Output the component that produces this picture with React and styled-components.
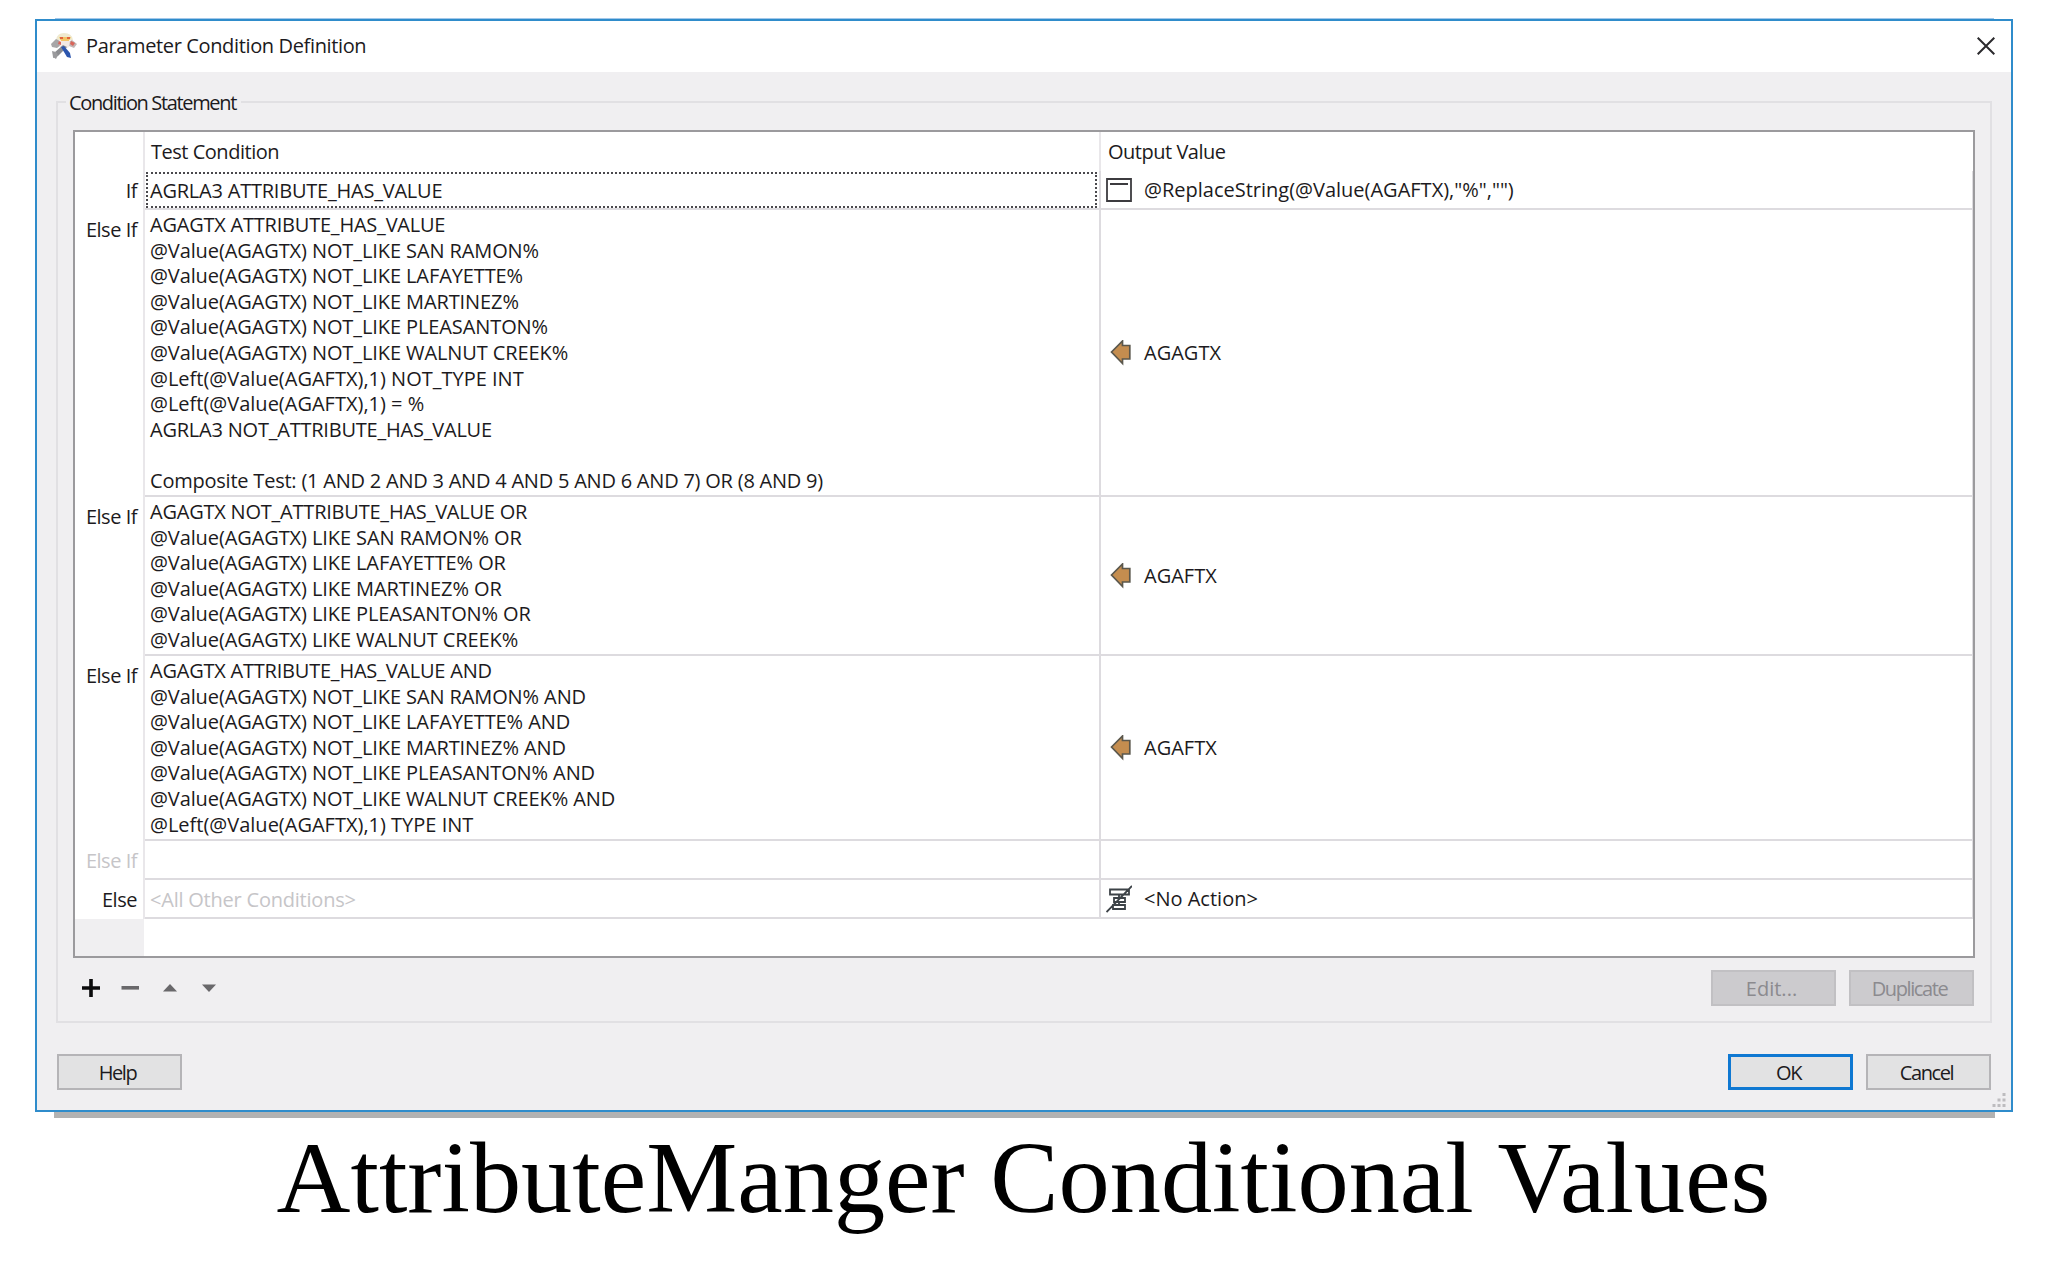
import React from 'react';
import styled, { createGlobalStyle } from 'styled-components';

const GlobalStyle = createGlobalStyle`
  * {
    box-sizing: border-box;
  }
  body {
    margin: 0;
    background: #fff;
    font-family: "Open Sans", "Noto Sans", sans-serif;
    font-size: 20px;
    font-weight: 430;
    line-height: 26px;
    color: #1c1a20;
  }
`

const Page = styled.main`
  display: flex;
  flex-direction: column;
  height: 1280px;
  padding: 18px 35px 0;
  overflow: hidden;
`

const TopEdge = styled.div`
  height: 1px;
  margin: 0 19px 0 20px;
  background: #a3c8ea;
`

const Dialog = styled.section`
  display: flex;
  flex-direction: column;
  height: 1093px;
  border: 2px solid #2f8ccb;
  background: #f0eff1;
`

const BottomEdge = styled.div`
  height: 6px;
  margin: 0 18px 0 19px;
  background: #b2b2b2;
`

const TitleBar = styled.header`
  display: flex;
  align-items: center;
  height: 51px;
  padding: 0 16px 2px 13px;
  background: #fff;
`

const Title = styled.h1`
  flex: 1;
  margin: 1px 0 0 7px;
  font-size: 20px;
  font-weight: 430;
  letter-spacing: -0.36px;
`

const GroupBox = styled.section`
  display: flex;
  flex-direction: column;
  width: 1936px;
  height: 922px;
  margin: 29px 0 0 19px;
  padding: 0 14px 0 15px;
  border: 2px solid #e1e0e3;
`

const GroupTitle = styled.h2`
  align-self: flex-start;
  margin: -13px 0 14px -7px;
  padding: 0 5px 0 3px;
  background: #f0eff1;
  font-size: 20px;
  font-weight: 430;
  letter-spacing: -1.35px;
`

const Table = styled.div`
  display: flex;
  flex-direction: column;
  width: 1902px;
  height: 828px;
  border: 2px solid #9b9a9d;
  background: #fff;
`

const Row = styled.div`
  display: grid;
  grid-template-columns: 70px 956px 1fr;
  flex: none;
  height: ${p => p.$height}px;
`

const RowLabel = styled.div`
  padding: ${p => p.$top}px 6px 0 0;
  border-right: 2px solid #e9e7ea;
  text-align: right;
  letter-spacing: -0.48px;
  color: ${p => (p.$muted ? '#c6c5c8' : '#1c1a20')};
`

const HeadCell = styled.div`
  padding: 7px 0 0 ${p => p.$left}px;
  border-right: ${p => (p.$last ? 0 : 2)}px solid #e9e7ea;
  letter-spacing: -0.48px;
`

const TestCell = styled.div`
  padding: ${p => (p.$single ? 1 : 2)}px 2px 0 1px;
  border-right: 2px solid #dddbdf;
  border-bottom: 2px solid #dddbdf;
`

const Focus = styled.div`
  height: 36px;
  padding-top: 4px;
  border: 2px dotted ${p => (p.$active ? '#4a494d' : 'transparent')};
`

const Condition = styled.div`
  height: 25.6px;
  padding-left: ${p => (p.$single ? 2 : 4)}px;
  line-height: 25.6px;
  white-space: pre;
  letter-spacing: ${p => p.$tracking}px;
  color: ${p => (p.$muted ? '#c6c5c8' : '#1c1a20')};
`

const OutputCell = styled.div`
  display: flex;
  align-items: center;
  gap: 12px;
  padding: 1px 0 0 5px;
  border-right: 1px solid #dddbdf;
  border-bottom: 2px solid #dddbdf;
  white-space: pre;
`

const Filler = styled.div`
  flex: 1;
  width: 69px;
  background: #f0eff1;
`

const Toolbar = styled.div`
  display: flex;
  align-items: center;
  height: 36px;
  margin-top: 12px;
  padding: 0 2px 0 5px;
`

const Tools = styled.div`
  display: flex;
  flex: 1;
  gap: 13.3px;
`

const Footer = styled.footer`
  display: flex;
  margin: 31px 20px 0;
`

const Spacer = styled.div`
  flex: 1;
`

const borders = {
  normal: '2px solid #b5b4b7',
  primary: '3px solid #0f78d2',
  disabled: '2px solid #c1c0c3',
}

const Button = styled.button`
  width: 125px;
  height: 36px;
  margin-left: ${p => p.$gap || 0}px;
  padding: 1px 4px 0 0;
  border: ${p => borders[p.$kind || 'normal']};
  background: ${p => (p.$kind === 'disabled' ? '#cccbce' : '#e2e2e3')};
  color: ${p => (p.$kind === 'disabled' ? '#8b8a8e' : '#1c1a20')};
  font: inherit;
  letter-spacing: ${p => (p.$tracking === undefined ? -1.4 : p.$tracking)}px;
  line-height: 29px;
`

const Grip = styled.svg`
  align-self: flex-end;
  width: 14px;
  height: 14px;
  margin: 3px 5px 0 0;
`

const Caption = styled.p`
  margin: 1px 1px 0 0;
  text-align: center;
  font-family: "Liberation Serif", "Times New Roman", serif;
  font-size: 102.4px;
  font-weight: 400;
  line-height: 118px;
  color: #000;
`

const AppIcon = () => (
  <svg width="29" height="29" viewBox="0 0 29 29">
    <path d="M6 9Q7 2 14 2q8 0 9 7z" fill="#efe9cf" />
    <path d="M1 13l5-5 4 2 1 4-4 3-5-1z" fill="#a7a6a8" />
    <path d="M27 13l-5-4-4 2 1 4 5 2z" fill="#c0b6b6" />
    <path d="M9 6h12l-2 4h-8z" fill="#f3c468" />
    <path d="M10 6h3v2h-3zM17 6h3v2h-3z" fill="#e2663d" />
    <path d="M9 10h11l-1 6-4 2-5-2z" fill="#f1e8e4" />
    <path d="M9 10l2 1v3l-3-1zM21 10l4 2-2 3-3-2z" fill="#d9655a" />
    <path d="M17 16l-9 9-5 2 1-5 9-8z" fill="#8b8c90" />
    <path d="M2 20l4 1 2 3-2 4-3-2z" fill="#9a9a9d" />
    <path d="M11 16l3-1 6 7 1 5-4-1z" fill="#2c55ad" />
  </svg>
)

const CloseIcon = () => (
  <svg width="18" height="18" viewBox="0 0 18 18" fill="none" stroke="#2b2a2d" strokeWidth="2">
    <path d="M.7.7l16.6 16.6M17.3.7L.7 17.3" />
  </svg>
)

const WindowIcon = () => (
  <svg width="26" height="24" viewBox="0 0 26 24" fill="none" stroke="#3c3b3f" strokeWidth="1.8">
    <path d="M1 1h24v22H1zM4 6h18" />
  </svg>
)

const ArrowIcon = () => (
  <svg width="26" height="26" viewBox="0 0 26 26">
    <path d="M5.500 12L16.500 1v4.500h7.300v13.500h-7.300v4.500z" fill="#c48d4f" stroke="#5a574c" strokeWidth="1.7" />
  </svg>
)

const NoActionIcon = () => (
  <svg width="26" height="28" viewBox="0 0 26 28" fill="none" stroke="#3c4247" strokeWidth="1.8">
    <path d="M4 4.500h19v5H4zM8 13h11v4H8zM7 20h12v4H7zM13 9.500V13M13 17v3M.5 27L26 1" />
  </svg>
)

const outputIcons = {
  window: WindowIcon,
  arrow: ArrowIcon,
  none: NoActionIcon,
}

const rows = [
  {
    label: 'If',
    height: 39,
    labelTop: 7,
    active: true,
    single: true,
    test: ['AGRLA3 ATTRIBUTE_HAS_VALUE'],
    icon: 'window',
    output: '@ReplaceString(@Value(AGAFTX),"%","")',
  },
  {
    label: 'Else If',
    height: 287,
    labelTop: 7,
    test: [
      'AGAGTX ATTRIBUTE_HAS_VALUE',
      '@Value(AGAGTX) NOT_LIKE SAN RAMON%',
      '@Value(AGAGTX) NOT_LIKE LAFAYETTE%',
      '@Value(AGAGTX) NOT_LIKE MARTINEZ%',
      '@Value(AGAGTX) NOT_LIKE PLEASANTON%',
      '@Value(AGAGTX) NOT_LIKE WALNUT CREEK%',
      '@Left(@Value(AGAFTX),1) NOT_TYPE INT',
      '@Left(@Value(AGAFTX),1) = %',
      'AGRLA3 NOT_ATTRIBUTE_HAS_VALUE',
      '',
      'Composite Test: (1 AND 2 AND 3 AND 4 AND 5 AND 6 AND 7) OR (8 AND 9)',
    ],
    icon: 'arrow',
    output: 'AGAGTX',
  },
  {
    label: 'Else If',
    height: 159,
    labelTop: 7,
    test: [
      'AGAGTX NOT_ATTRIBUTE_HAS_VALUE OR',
      '@Value(AGAGTX) LIKE SAN RAMON% OR',
      '@Value(AGAGTX) LIKE LAFAYETTE% OR',
      '@Value(AGAGTX) LIKE MARTINEZ% OR',
      '@Value(AGAGTX) LIKE PLEASANTON% OR',
      '@Value(AGAGTX) LIKE WALNUT CREEK%',
    ],
    icon: 'arrow',
    output: 'AGAFTX',
  },
  {
    label: 'Else If',
    height: 185,
    labelTop: 7,
    test: [
      'AGAGTX ATTRIBUTE_HAS_VALUE AND',
      '@Value(AGAGTX) NOT_LIKE SAN RAMON% AND',
      '@Value(AGAGTX) NOT_LIKE LAFAYETTE% AND',
      '@Value(AGAGTX) NOT_LIKE MARTINEZ% AND',
      '@Value(AGAGTX) NOT_LIKE PLEASANTON% AND',
      '@Value(AGAGTX) NOT_LIKE WALNUT CREEK% AND',
      '@Left(@Value(AGAFTX),1) TYPE INT',
    ],
    icon: 'arrow',
    output: 'AGAFTX',
  },
  { label: 'Else If', height: 39, labelTop: 7, mutedLabel: true, single: true, test: [''] },
  {
    label: 'Else',
    height: 39,
    labelTop: 7,
    muted: true,
    single: true,
    test: ['<All Other Conditions>'],
    icon: 'none',
    output: '<No Action>',
  },
]

// function calls are set a little looser than plain attribute names
const tracking = line => {
  if (line.startsWith('@Left')) return 0
  if (line.startsWith('@Value')) return -0.1
  return -0.22
}

const ConditionRow = ({ row }) => {
  const Icon = outputIcons[row.icon]
  const lines = row.test.map((line, i) => (
    <Condition key={i} $tracking={tracking(line)} $muted={row.muted} $single={row.single}>
      {line}
    </Condition>
  ))

  return (
    <Row $height={row.height}>
      <RowLabel $top={row.labelTop} $muted={row.mutedLabel}>{row.label}</RowLabel>
      <TestCell $single={row.single}>
        {row.single ? <Focus $active={row.active}>{lines}</Focus> : lines}
      </TestCell>
      <OutputCell>
        {Icon && <Icon />}
        {row.output}
      </OutputCell>
    </Row>
  )
}

const ToolIcon = ({ d, color }) => (
  <svg width="26" height="26" viewBox="0 0 26 26">
    <path d={d} fill={color} />
  </svg>
)

const App = () => {
  return (
    <Page>
      <GlobalStyle />
      <TopEdge />
      <Dialog>
        <TitleBar>
          <AppIcon />
          <Title>Parameter Condition Definition</Title>
          <CloseIcon />
        </TitleBar>
        <GroupBox>
          <GroupTitle>Condition Statement</GroupTitle>
          <Table>
            <Row $height={39}>
              <RowLabel />
              <HeadCell $left={6}>Test Condition</HeadCell>
              <HeadCell $left={7} $last>Output Value</HeadCell>
            </Row>
            {rows.map((row, i) => <ConditionRow key={i} row={row} />)}
            <Filler />
          </Table>
          <Toolbar>
            <Tools>
              <ToolIcon color="#0b0b0c" d="M11.200 4h3.600v7.200H22v3.600h-7.200V22h-3.600v-7.200H4v-3.600h7.200z" />
              <ToolIcon color="#69686b" d="M4.500 11h17.500v3.600H4.500z" />
              <ToolIcon color="#69686b" d="M6 16.500L13 9l7 7.500z" />
              <ToolIcon color="#69686b" d="M6 9.500h14L13 17z" />
            </Tools>
            <Button $kind="disabled" $tracking={0}>Edit...</Button>
            <Button $kind="disabled" $gap={13}>Duplicate</Button>
          </Toolbar>
        </GroupBox>
        <Footer>
          <Button>Help</Button>
          <Spacer />
          <Button $kind="primary">OK</Button>
          <Button $gap={13}>Cancel</Button>
        </Footer>
        <Grip viewBox="0 0 14 14" fill="#bdbcbf">
          <path d="M10.500 0h3v3h-3zM5.500 5.500h3v3h-3zM10.500 5.500h3v3h-3zM.5 11h3v3h-3zM5.500 11h3v3h-3zM10.500 11h3v3h-3z" />
        </Grip>
      </Dialog>
      <BottomEdge />
      <Caption>AttributeManger Conditional Values</Caption>
    </Page>
  )
}

export default App;
